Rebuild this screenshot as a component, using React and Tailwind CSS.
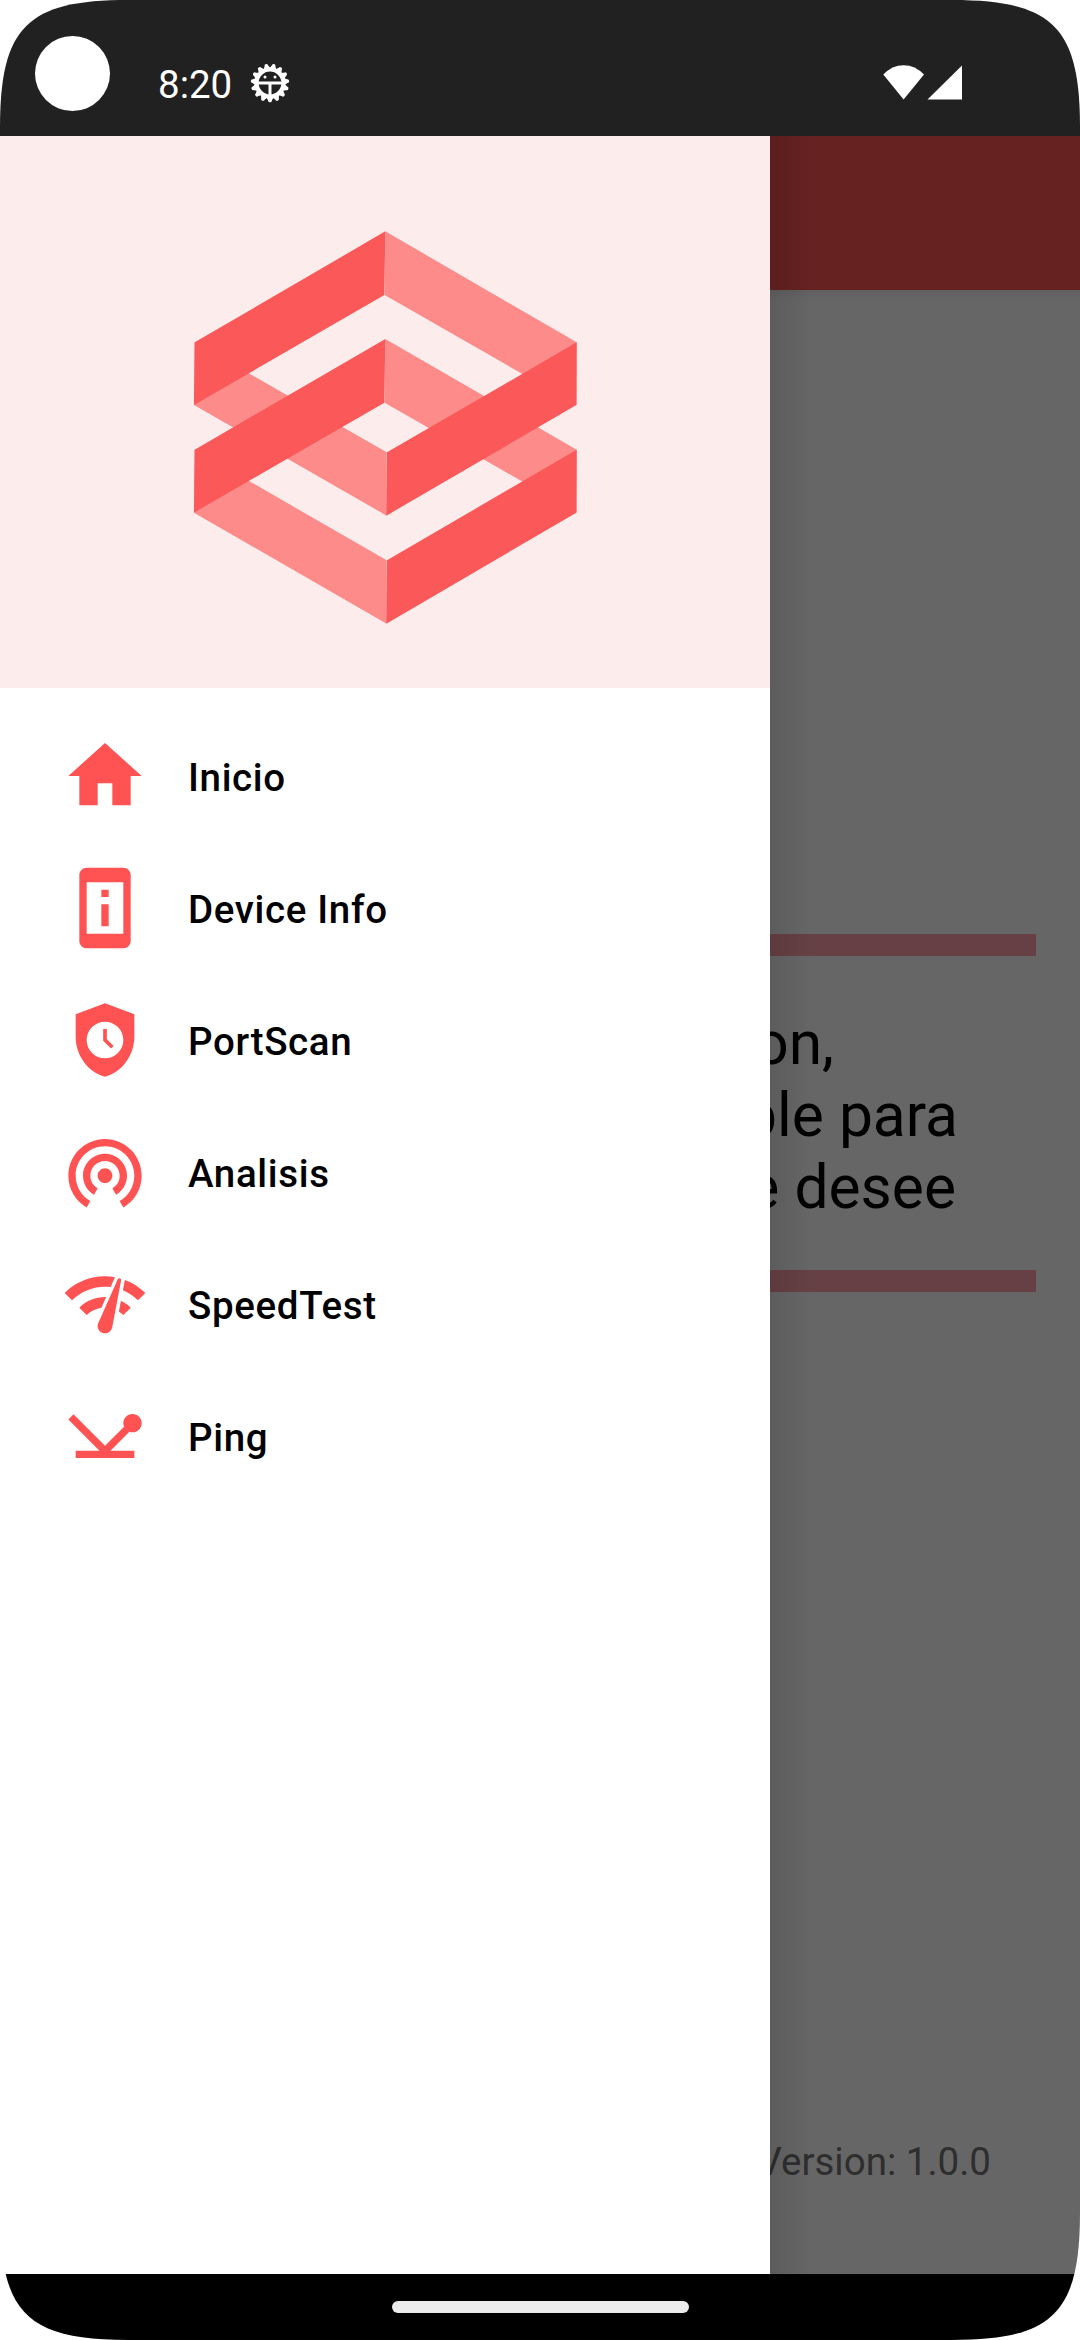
const MENU = [
  { label: 'Inicio', d: 'M10 20v-6h4v6h5v-8h3L12 3 2 12h3v8z' },
  {
    label: 'Device Info',
    d: 'M13 7h-2v2h2V7zm0 4h-2v6h2v-6zm4-9.99L7 1c-1.1 0-2 .9-2 2v18c0 1.1.9 2 2 2h10c1.1 0 2-.9 2-2V3c0-1.1-.9-1.99-2-1.99zM17 19H7V5h10v14z',
  },
  {
    label: 'PortScan',
    d: 'M12 2 4 5v6.09c0 5.05 3.41 9.76 8 10.91 4.59-1.15 8-5.86 8-10.91V5l-8-3zm0 15c-2.76 0-5-2.24-5-5s2.24-5 5-5 5 2.24 5 5-2.24 5-5 5zm1.65-2.65L11.5 12.2V9h1v2.79l1.85 1.85-.7.71z',
  },
  {
    label: 'Analisis',
    d: 'M12 11c-1.1 0-2 .9-2 2s.9 2 2 2 2-.9 2-2-.9-2-2-2zm6 2c0-3.31-2.69-6-6-6s-6 2.69-6 6c0 2.22 1.21 4.15 3 5.19l1-1.74c-1.19-.7-2-1.97-2-3.45 0-2.21 1.79-4 4-4s4 1.79 4 4c0 1.48-.81 2.75-2 3.45l1 1.74c1.79-1.04 3-2.97 3-5.19zM12 3C6.48 3 2 7.48 2 13c0 3.7 2.01 6.92 4.99 8.65l1-1.73C5.61 18.53 4 15.96 4 13c0-4.42 3.58-8 8-8s8 3.58 8 8c0 2.96-1.61 5.53-4 6.92l1 1.73c2.99-1.73 5-4.95 5-8.65 0-5.52-4.48-10-10-10z',
  },
  {
    label: 'SpeedTest',
    d: 'M15.9 5c-.17 0-.32.09-.41.23l-.07.15-5.18 11.65c-.16.29-.26.61-.26.96 0 1.11.9 2.01 2.01 2.01.96 0 1.77-.68 1.96-1.59l.01-.03L16.4 5.5c0-.28-.22-.5-.5-.5zM1 9l2 2c2.88-2.88 6.79-4.08 10.53-3.62l1.19-2.68C9.89 3.84 4.74 5.27 1 9zm20 2l2-2c-1.64-1.64-3.55-2.82-5.59-3.57l-.53 2.82c1.5.62 2.9 1.53 4.12 2.75zm-4 4l2-2c-.8-.8-1.7-1.42-2.66-1.89l-.55 2.92c.42.27.83.59 1.21.97zM5 13l2 2c1.13-1.13 2.56-1.79 4.03-2l1.28-2.88c-2.63-.08-5.3.87-7.31 2.88z',
  },
  {
    label: 'Ping',
    d: 'M12 14.67 3.41 6.09 2 7.5l8.5 8.5H4v2h16v-2h-6.5l5.15-5.15c.26.1.55.15.85.15 1.38 0 2.5-1.12 2.5-2.5S20.88 6 19.5 6 17 7.12 17 8.5c0 .35.07.67.2.97l-5.2 5.2z',
  },
];

const TEETH = Array.from({ length: 15 }, (_, i) => 90 + i * 24);

function DebugIcon() {
  return (
    <svg className="ml-[17px] mt-[63px] size-[40px]" viewBox="-20 -20 40 40">
      {TEETH.map((a) => (
        <path key={a} d="M13 -4.2L17.4 -1.9A1.9 1.9 0 0 1 17.4 1.9L13 4.2z" fill="#fff" transform={`rotate(${a})`} />
      ))}
      <circle r="13.4" fill="none" stroke="#fff" strokeWidth="4" />
      <path d="M-13 0H13M0 0V13" stroke="#fff" strokeWidth="3" />
      <circle cx="-5" cy="-6" r="1.5" fill="#fff" />
      <circle cx="5" cy="-6" r="1.5" fill="#fff" />
    </svg>
  );
}

function StatusBar() {
  return (
    <div className="flex h-[136px] shrink-0 items-start bg-[#212121]">
      <div className="ml-[35px] mt-[36px] size-[75px] rounded-full bg-white" />
      <div className="ml-[48px] mt-[62px] w-[75px] text-[38.5px] leading-[46px] text-white">8:20</div>
      <DebugIcon />
      <svg className="ml-auto mr-[117px] mt-[64px] h-[37px] w-[80px]" viewBox="0 0 80 37" fill="#fff">
        <path d="M0.3 10.6Q9 1.2 20.6 1.2T41 10.6L20.6 35.6z" />
        <path d="M44.5 35.6L79 1.6V35.6z" />
      </svg>
    </div>
  );
}

function Logo() {
  return (
    <svg className="mt-[74px] h-[430px] w-[410px]" viewBox="0 0 1230 1290">
      <g fill="#fc8b8a">
        <path d="M616 64L1190 397V585L614 255z" />
        <path d="M616 387L1190 719V908L614 578z" />
        <path d="M44 397L620 727V917L42 585z" />
        <path d="M44 719L620 1051V1241L42 908z" />
      </g>
      <g fill="#fb5959">
        <path d="M616 64L44 397L42 585L613 255z" />
        <path d="M616 387L44 719L42 908L613 578z" />
        <path d="M1190 397L621 727L619 917L1189 585z" />
        <path d="M1190 719L621 1051L619 1241L1189 908z" />
      </g>
    </svg>
  );
}

function Drawer() {
  return (
    <nav className="flex w-[770px] shrink-0 flex-col bg-white">
      <div className="flex h-[552px] justify-center bg-[#fdecec]">
        <Logo />
      </div>
      <ul className="mt-[22px] flex flex-col">
        {MENU.map((m) => (
          <li key={m.label} className="flex h-[132px] items-center pl-[61px]">
            <svg className="size-[88px]" viewBox="0 0 24 24" fill="#ff5252">
              <path d={m.d} />
            </svg>
            <span className="ml-[39px] pt-[3px] text-[38.5px] font-medium tracking-[0.65px] text-black">{m.label}</span>
          </li>
        ))}
      </ul>
    </nav>
  );
}

function DimmedPage() {
  return (
    <main className="relative flex flex-1 flex-col overflow-hidden bg-[#666]">
      <div className="h-[154px] shrink-0 bg-[#662121]" />
      <div className="h-[12px] bg-linear-to-b from-black/6 to-transparent" />
      <div className="mt-[632px] mr-[44px] h-[22px] bg-[#664044]" />
      <div className="mt-[51px] flex h-[263px] flex-col items-end pt-[1px] text-[60.5px] leading-[72px] whitespace-nowrap text-black">
        <div className="mr-[246px]">on,</div>
        <div className="mr-[122px]">ble para</div>
        <div className="mr-[124px]">e desee</div>
      </div>
      <div className="mr-[44px] h-[22px] bg-[#664044]" />
      <div className="mt-auto mr-[89px] mb-[89px] self-end text-[38.5px] leading-[46px] whitespace-nowrap text-[#2e2e2e]">
        Version: 1.0.0
      </div>
      <div className="absolute inset-y-0 left-0 w-[42px] bg-linear-to-r from-black/10 to-transparent" />
    </main>
  );
}

export default function App() {
  return (
    <div className="h-[2340px] w-[1080px] bg-white font-['Roboto',sans-serif]">
      <div className="flex h-full flex-col [clip-path:path('M0_128C0_27_27_0_128_0H952C1053_0_1080_27_1080_128V2212C1080_2313_1053_2340_952_2340H128C27_2340_0_2313_0_2212Z')]">
        <StatusBar />
        <div className="flex h-[2138px] shrink-0">
          <Drawer />
          <DimmedPage />
        </div>
        <div className="flex h-[66px] justify-center bg-black pt-[27px]">
          <div className="h-[12px] w-[297px] rounded-full bg-[#ececec]" />
        </div>
      </div>
    </div>
  );
}
